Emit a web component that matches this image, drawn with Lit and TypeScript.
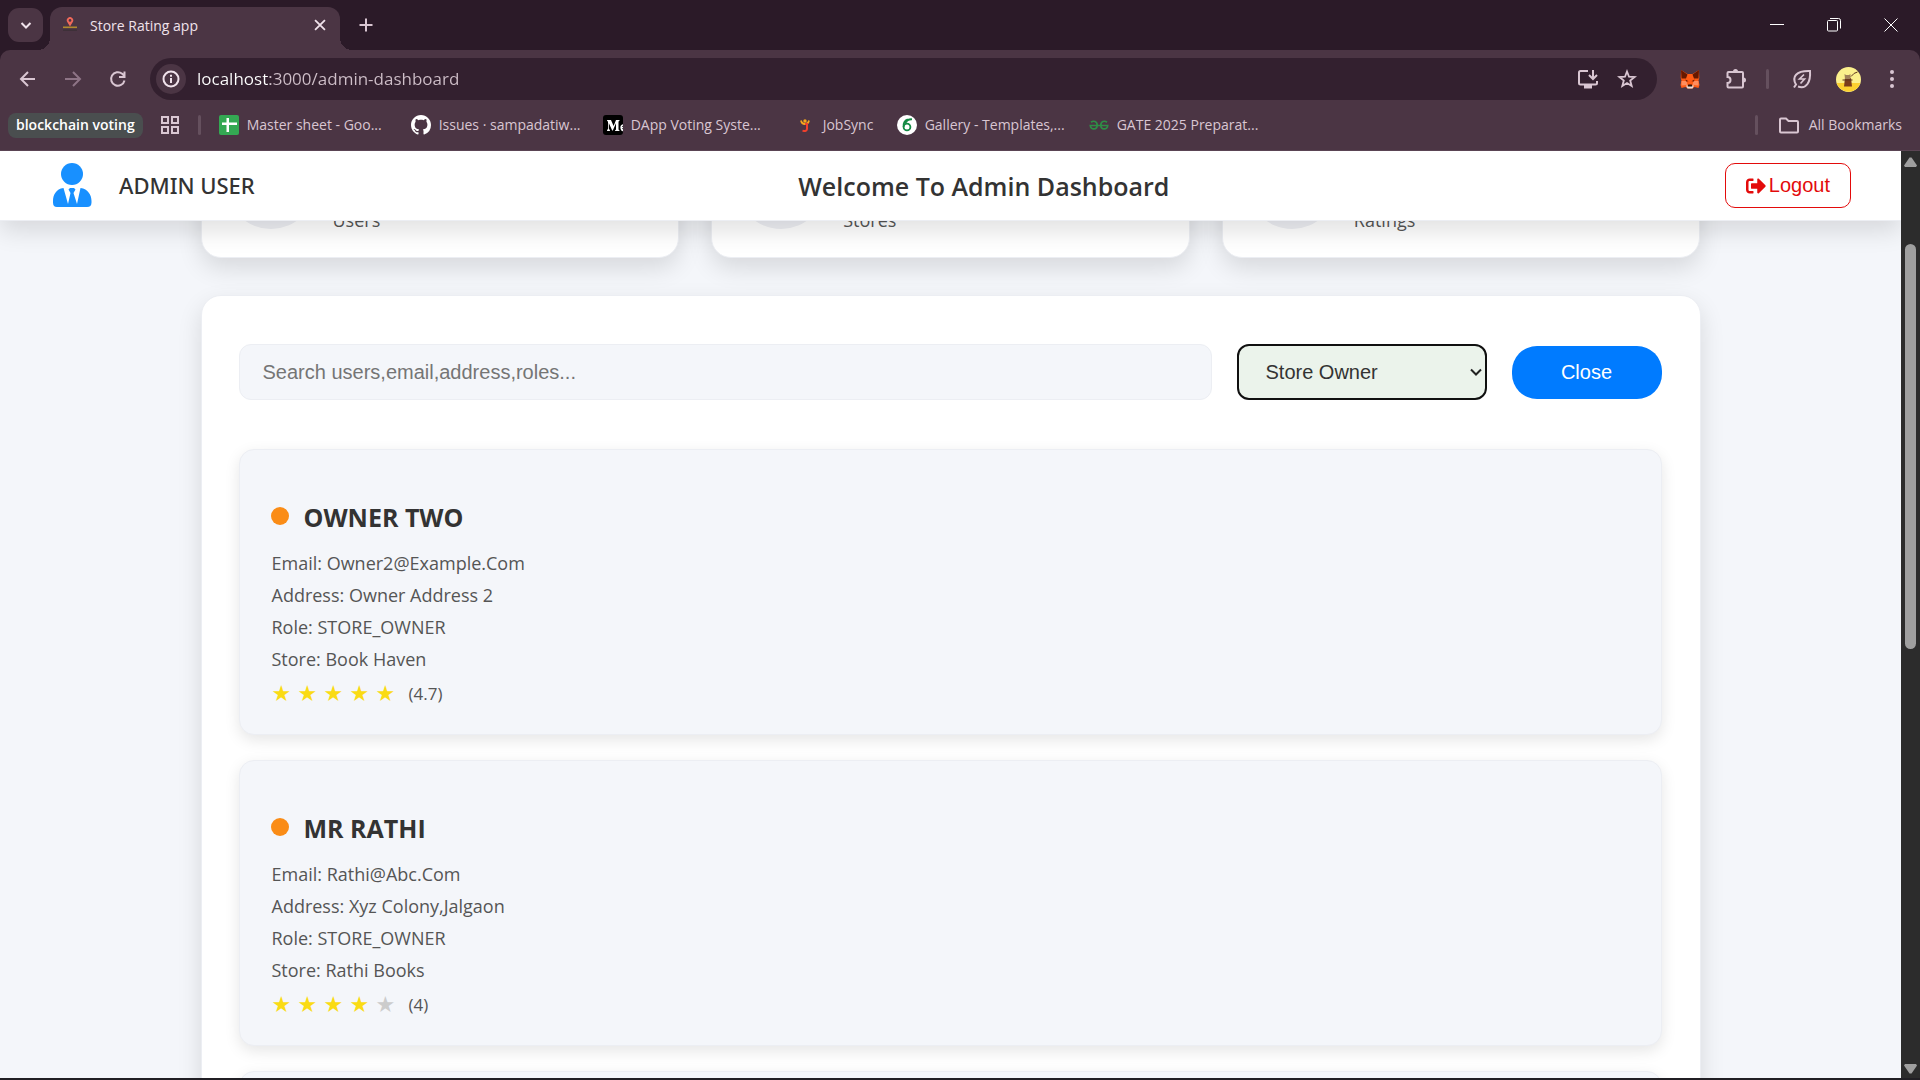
import { LitElement, html, css, svg, TemplateResult } from "lit";
import { customElement, property } from "lit/decorators.js";
import { classMap } from "lit/directives/class-map.js";

interface Bookmark {
  title: string;
  icon: TemplateResult;
  short?: boolean;
}

interface Owner {
  name: string;
  email: string;
  address: string;
  role: string;
  store: string;
  rating: number;
}

const favicon = html`<svg width="16" height="16" viewBox="0 0 16 16">
  <path d="M1 9.500h14v1.600H1z" fill="#b08a2e" />
  <path d="M1 12.500h14v1.500H1z" fill="#3d3038" />
  <path d="M8 9.500 5.400 5.200a3.200 3.200 0 1 1 5.200 0z" fill="#f0695a" />
  <circle cx="8" cy="3.400" r="1.300" fill="#4b3544" />
</svg>`;

const bookmarks: Bookmark[] = [
  {
    title: "Master sheet - Goo...",
    icon: html`<svg width="20" height="20" viewBox="0 0 20 20">
      <rect width="20" height="20" rx="2" fill="#34a853" />
      <path d="M7.500 3h2.500v4.500H18v2.500h-8V17H7.500v-7H3V7.500h4.500z" fill="#fff" />
    </svg>`,
  },
  {
    title: "Issues · sampadatiw...",
    icon: html`<svg width="20" height="20" viewBox="0 0 16 16">
      <path
        fill="#fff"
        d="M8 0C3.580 0 0 3.580 0 8c0 3.540 2.290 6.530 5.470 7.590.4.070.550-.170.550-.380 0-.190-.010-.820-.010-1.490-2.010.370-2.530-.490-2.690-.940-.090-.230-.480-.940-.820-1.130-.280-.150-.680-.520-.010-.530.630-.010 1.080.580 1.230.820.720 1.210 1.870.870 2.330.660.070-.520.280-.870.510-1.070-1.780-.200-3.640-.890-3.640-3.950 0-.870.310-1.590.820-2.150-.080-.200-.360-1.020.080-2.120 0 0 .670-.210 2.200.820.640-.180 1.320-.270 2-.270s1.360.090 2 .270c1.530-1.040 2.200-.820 2.200-.820.440 1.100.160 1.920.080 2.120.510.560.820 1.270.820 2.150 0 3.070-1.870 3.750-3.650 3.950.290.250.540.730.540 1.480 0 1.070-.010 1.930-.010 2.200 0 .210.150.460.550.380A8.010 8.010 0 0 0 16 8c0-4.420-3.580-8-8-8z"
      />
    </svg>`,
  },
  {
    title: "DApp Voting Syste...",
    icon: html`<svg width="20" height="20" viewBox="0 0 20 20">
      <rect width="20" height="20" rx="3" fill="#000" />
      <path
        fill="#fff"
        d="M4 5h4l2.600 6L13 5h3.500v.8l-1 .8v8l1 .8v.6h-4.500v-.6l1-.8V8.200L9.800 15.600h-.6L5.800 8v5.600l1.200 1.800v.6H4v-.6l1-1.600V6.800L4 5.600z"
      />
      <path d="M20 9.200a3.200 3.200 0 0 0-2.600 3.500c0 2 1.100 3.300 2.600 3.500v-2a2 2 0 0 1-.8-1.200h.8v-1h-.9c0-.6.4-1.100.9-1.200z" fill="#fff" />
    </svg>`,
  },
  {
    title: "JobSync",
    short: true,
    icon: html`<svg width="20" height="20" viewBox="0 0 20 20">
      <path d="M6 5.500c.5 2.500 1.700 3.500 4 3.500s3.500-1 4-3.500" fill="none" stroke="#f5a81c" stroke-width="1.800" />
      <circle cx="10" cy="6" r="1.700" fill="#f5a81c" />
      <path d="M10 9h2v5q0 2.500-4.500 1.800" fill="none" stroke="#f0402c" stroke-width="2" />
    </svg>`,
  },
  {
    title: "Gallery - Templates,...",
    icon: html`<svg width="20" height="20" viewBox="0 0 20 20">
      <circle cx="10" cy="10" r="10" fill="#fff" />
      <circle cx="10" cy="12" r="3.400" fill="none" stroke="#138a43" stroke-width="1.800" />
      <path d="M6.600 12c-.4-3.600 1.500-6.500 4.200-7.600M8.500 8c1.200-2.700 3.600-3.900 6.500-3.700" fill="none" stroke="#138a43" stroke-width="1.800" />
    </svg>`,
  },
  {
    title: "GATE 2025 Preparat...",
    icon: html`<svg width="20" height="20" viewBox="0 0 20 20">
      <path
        d="M2 7.200c2.600-1.900 6.200-.9 6.200 3 0 4.600-6.600 5.300-6.900.3h17.400c-.3 5-6.900 4.300-6.900-.3 0-3.900 3.600-4.900 6.200-3"
        fill="none"
        stroke="#2f8d46"
        stroke-width="1.700"
      />
    </svg>`,
  },
];

const owners: Owner[] = [
  { name: "OWNER TWO", email: "Owner2@Example.Com", address: "Owner Address 2", role: "STORE_OWNER", store: "Book Haven", rating: 4.7 },
  { name: "MR RATHI", email: "Rathi@Abc.Com", address: "Xyz Colony,Jalgaon", role: "STORE_OWNER", store: "Rathi Books", rating: 4 },
];

const stroke = (size: number, body: TemplateResult<2>) => html`<svg
  width=${size}
  height=${size}
  viewBox="0 0 20 20"
  fill="none"
  stroke="currentColor"
  stroke-width="2"
>
  ${body}
</svg>`;

@customElement("browser-chrome")
class BrowserChrome extends LitElement {
  static styles = css`
    :host {
      display: block;
      font-family: "Open Sans", "Noto Sans", sans-serif;
      color: #d9c6d2;
      background: #2b1a28;
    }
    button,
    a {
      display: flex;
      align-items: center;
      justify-content: center;
      padding: 0;
      border: 0;
      background: none;
      color: inherit;
      font: inherit;
      text-decoration: none;
    }
    svg {
      display: block;
      flex: none;
    }
    .strip {
      display: flex;
      height: 50px;
    }
    .tabsearch {
      width: 35px;
      height: 34px;
      margin: 8px 7px 0 8px;
      border-radius: 11px;
      background: #4b3544;
      color: #f0e2eb;
    }
    .tab {
      position: relative;
      display: flex;
      align-items: center;
      width: 290px;
      height: 43px;
      margin-top: 7px;
      padding: 0 11px 0 12px;
      box-sizing: border-box;
      border-radius: 12px 12px 0 0;
      background: #4b3544;
      color: #f0e2eb;
    }
    .tab::before,
    .tab::after {
      content: "";
      position: absolute;
      bottom: 0;
      width: 12px;
      height: 12px;
    }
    .tab::before {
      right: 100%;
      background: radial-gradient(circle at 0 0, transparent 12px, #4b3544 12px);
    }
    .tab::after {
      left: 100%;
      background: radial-gradient(circle at 100% 0, transparent 12px, #4b3544 12px);
    }
    .tab-title {
      flex: 1;
      padding: 0 0 6px 12px;
      font-size: 14px;
      line-height: 20px;
    }
    .tab svg {
      margin-bottom: 7px;
    }
    .newtab {
      width: 28px;
      height: 36px;
      margin: 7px 0 0 12px;
    }
    .window {
      display: flex;
      margin: 0 1px 0 auto;
      color: #fff;
    }
    .window button {
      width: 57px;
      height: 49px;
    }
    .toolbar {
      display: flex;
      align-items: center;
      height: 58px;
      padding: 0 14px 0 13px;
      border-radius: 10px 10px 0 0;
      background: #4b3544;
    }
    .nav {
      width: 30px;
      height: 30px;
      margin-right: 15px;
    }
    .nav.dim {
      color: #8e7486;
    }
    .omnibox {
      display: flex;
      flex: 1;
      align-items: center;
      height: 42px;
      margin: 0 17px 0 2px;
      padding: 0 18px 0 6px;
      border-radius: 21px;
      background: #33202f;
    }
    .info {
      width: 30px;
      height: 30px;
      border-radius: 15px;
      background: #4b3544;
      color: #f0e2eb;
    }
    .url {
      flex: 1;
      min-width: 0;
      padding: 0 0 0 11px;
      border: 0;
      outline: 0;
      font-family: inherit;
      font-size: 17px;
      line-height: 26px;
      color: #cfbfc9;
      background: linear-gradient(90deg, #fff 84px, #cfbfc9 84px);
      -webkit-background-clip: text;
      background-clip: text;
      -webkit-text-fill-color: transparent;
    }
    .omnibox .tool {
      width: 24px;
      height: 30px;
      margin-left: 15px;
    }
    .ext {
      width: 32px;
      height: 32px;
      margin-right: 14px;
    }
    .rule {
      width: 3px;
      height: 20px;
      border-radius: 2px;
      background: #65505e;
    }
    .toolbar .rule {
      margin-right: 17px;
    }
    .menu {
      width: 28px;
      height: 32px;
    }
    .marks {
      display: flex;
      align-items: center;
      box-sizing: border-box;
      height: 43px;
      padding: 0 18px 8px 8px;
      border-bottom: 1px solid #5a4453;
      background: #4b3544;
      font-size: 14px;
      line-height: 20px;
    }
    .group {
      height: 25px;
      padding: 0 8px;
      border-radius: 8px;
      background: #4a4e4f;
      color: #fff;
      font-weight: 600;
    }
    .apps {
      margin: 0 18px 0 17px;
    }
    .mark {
      flex: 0 0 184px;
      justify-content: flex-start;
      gap: 8px;
      padding-right: 8px;
      white-space: nowrap;
    }
    .mark.short {
      flex-basis: 94px;
    }
    .list {
      display: flex;
      flex: 1;
      margin-left: 18px;
    }
    .all {
      gap: 9px;
      margin-left: 20px;
    }
  `;

  render() {
    return html`
      <div class="strip">
        <button class="tabsearch" aria-label="Search tabs">
          ${stroke(20, svg`<path d="m5.500 8 4.500 4.500L14.500 8" />`)}
        </button>
        <div class="tab">
          ${favicon}
          <span class="tab-title">Store Rating app</span>
          <button aria-label="Close tab">
            ${stroke(18, svg`<path d="M4.500 4.500l11 11m0-11l-11 11" />`)}
          </button>
        </div>
        <button class="newtab" aria-label="New tab">
          ${stroke(20, svg`<path d="M10 3.500v13M3.500 10h13" />`)}
        </button>
        <div class="window">
          <button aria-label="Minimize">
            <svg width="14" height="14" stroke="currentColor"><path d="M0 6.500h14" /></svg>
          </button>
          <button aria-label="Restore">
            <svg width="14" height="14" fill="none" stroke="currentColor">
              <rect x=".5" y="2.500" width="10" height="10.500" rx="1" />
              <path d="M3 .5h8.500a2 2 0 0 1 2 2V10.500" />
            </svg>
          </button>
          <button aria-label="Close">
            <svg width="14" height="14" stroke="currentColor"><path d="M.5.5l13 13m0-13l-13 13" /></svg>
          </button>
        </div>
      </div>

      <div class="toolbar">
        <button class="nav" aria-label="Back">
          ${stroke(20, svg`<path d="M17 10H3.500M10 3l-7 7 7 7" />`)}
        </button>
        <button class="nav dim" aria-label="Forward">
          ${stroke(20, svg`<path d="M2 10h14.500M10 3l7 7-7 7" />`)}
        </button>
        <button class="nav" aria-label="Reload">
          ${stroke(20, svg`<path d="M16.500 11.500A6.800 6.800 0 1 1 14.200 4.700L16.500 7M16.500 2.500V8H11" />`)}
        </button>
        <div class="omnibox">
          <button class="info" aria-label="Site information">
            ${stroke(20, svg`<circle cx="10" cy="10" r="7.500" /><path d="M10 9v5M10 5.800v2" />`)}
          </button>
          <input class="url" aria-label="Address" value="localhost:3000/admin-dashboard" />
          <button class="tool" aria-label="Install app">
            <svg width="22" height="20" viewBox="0 0 22 20" fill="none" stroke="currentColor" stroke-width="2">
              <path d="M11 2H3.500Q2 2 2 3.500v10.500q0 1.500 1.500 1.500h15q1.500 0 1.500-1.500V12M16 1v8.500M12 6l4 4 4-4" />
              <path d="M8 16.500h6v2H8z" fill="currentColor" />
            </svg>
          </button>
          <button class="tool" aria-label="Bookmark this page">
            <svg width="20" height="20" viewBox="0 0 20 20" fill="none" stroke="currentColor" stroke-width="1.800">
              <path d="m10 2.500 2 5.200 5.600.3-4.400 3.500 1.500 5.500L10 14l-4.700 3 1.500-5.500L2.400 8l5.600-.3z" />
            </svg>
          </button>
        </div>
        <button class="ext" aria-label="Wallet extension">
          <svg width="20" height="20" viewBox="0 0 20 20">
            <path d="M1 1l6.500 4h5L19 1l.3 8-.8 2.500L19.500 16l-1 3-4-1-2 1.500h-5l-2-1.500-4 1-1-3 1-4.500L.7 9z" fill="#ff5c16" />
            <path d="M1 1 7.500 5.500 6 9.500H1.500zM19 1l-6.500 4.500 1.500 4h4.500z" fill="#661800" />
            <path d="M1.500 12h5l1 4-6 .5zM18.500 12h-5l-1 4 6 .5z" fill="#ff8d5d" />
            <path d="M5.500 10.500l3 1.800-2.500.3zM14.500 10.500l-3 1.800 2.500.3z" fill="#661800" />
            <path d="M6 16.500h8L12.500 19.500h-5z" fill="#e8dfdc" />
            <path d="M8.200 15.500h3.600l.5 2H7.700z" fill="#2a1208" />
          </svg>
        </button>
        <button class="ext" aria-label="Extensions">
          <svg width="22" height="22" viewBox="0 0 22 22" fill="none" stroke="currentColor" stroke-width="2">
            <path d="M3.500 4h13.500q1 0 1 1v13.500q0 1-1 1H3.500q-1 0-1-1V15a3 3 0 0 0 0-6V5q0-1 1-1z" />
            <path d="M8 3.500a2.500 2.500 0 0 1 5 0zM18.500 9.500a2.500 2.500 0 0 1 0 5z" fill="currentColor" stroke="none" />
          </svg>
        </button>
        <span class="rule"></span>
        <button class="ext" aria-label="Energy saver">
          <svg width="22" height="22" viewBox="0 0 22 22" fill="none" stroke="currentColor" stroke-width="2">
            <path d="M3 19.500l2-3C.5 9 5 2.500 19 3c.8 11-3.500 18.500-12 15.500" />
            <path d="M13 6.500 8.500 11h5L9.500 15.500" stroke-width="1.700" />
          </svg>
        </button>
        <button class="ext" aria-label="Profile">
          <svg width="25" height="25" viewBox="0 0 25 25">
            <circle cx="12.500" cy="12.500" r="12.500" fill="#fbf08c" />
            <path d="M.6 16h23.800A12.500 12.500 0 0 1 .6 16z" fill="#fcd02f" />
            <path d="M9 11h6l1 8.500H8z" fill="#7a3b1c" />
            <path d="M8.500 7l1.500 1h3l1.500-1v5H9z" fill="#a08058" />
            <path d="M6.500 13h10M15 9.500q3-4 6.500-4.500" stroke="#5d3520" fill="none" />
          </svg>
        </button>
        <button class="menu" aria-label="Menu">
          <svg width="20" height="20" fill="currentColor">
            <circle cx="10" cy="3" r="2" /><circle cx="10" cy="10" r="2" /><circle cx="10" cy="17" r="2" />
          </svg>
        </button>
      </div>

      <nav class="marks" aria-label="Bookmarks">
        <button class="group">blockchain voting</button>
        <button class="apps" aria-label="Apps">
          <svg width="20" height="20" fill="none" stroke="currentColor" stroke-width="2">
            <path d="M2 2h6v6H2zM12 2h6v6h-6zM2 12h6v6H2zM12 12h6v6h-6z" />
          </svg>
        </button>
        <span class="rule"></span>
        <div class="list">
          ${bookmarks.map(
            (b) => html`<a class=${classMap({ mark: true, short: !!b.short })} href="#">${b.icon}<span>${b.title}</span></a>`
          )}
        </div>
        <span class="rule"></span>
        <button class="all">
          <svg width="22" height="20" viewBox="0 0 22 20" fill="none" stroke="currentColor" stroke-width="2">
            <path d="M2 4.500Q2 3.500 3 3.500h5l2.500 2.500H19q1 0 1 1v9.500q0 1-1 1H3q-1 0-1-1z" />
          </svg>
          All Bookmarks
        </button>
      </nav>
    `;
  }
}

@customElement("owner-card")
class OwnerCard extends LitElement {
  @property({ attribute: false }) owner?: Owner;

  static styles = css`
    :host {
      display: block;
      padding: 49px 31px 21px;
      border: 1px solid #eceef3;
      border-radius: 15px;
      background: #f4f6fa;
      box-shadow: 0 5px 15px rgba(0, 0, 0, 0.1);
      color: #555;
      font-size: 18px;
      line-height: 32px;
    }
    .title {
      display: flex;
      align-items: center;
      gap: 15px;
      margin: 0 0 12px;
      color: #333;
      font-size: 25px;
      font-weight: 700;
      line-height: 36px;
    }
    .dot {
      width: 18px;
      height: 18px;
      margin-bottom: 2px;
      border-radius: 9px;
      background: #fa8c16;
    }
    .details {
      padding-left: 1px;
    }
    p {
      margin: 0;
    }
    .rating {
      display: flex;
      align-items: center;
      font-size: 17px;
      line-height: 38px;
    }
    .star {
      width: 26px;
      color: #fadb14;
      font-family: "DejaVu Sans", sans-serif;
      font-size: 22px;
    }
    .star.off {
      color: #ccc;
    }
    .score {
      margin-left: 7px;
    }
  `;

  render() {
    const o = this.owner;
    if (!o) return html``;
    return html`
      <h3 class="title"><span class="dot"></span>${o.name}</h3>
      <div class="details">
        <p>Email: ${o.email}</p>
        <p>Address: ${o.address}</p>
        <p>Role: ${o.role}</p>
        <p>Store: ${o.store}</p>
        <div class="rating">
          ${[1, 2, 3, 4, 5].map(
            (n) => html`<span class=${classMap({ star: true, off: n > Math.round(o.rating) })}>★</span>`
          )}
          <span class="score">(${o.rating})</span>
        </div>
      </div>
    `;
  }
}

@customElement("app-root")
class AppRoot extends LitElement {
  static styles = css`
    :host {
      display: flex;
      flex-direction: column;
      height: 100vh;
      overflow: hidden;
      background: #f4f6fa;
      color: #333;
      font-family: "Open Sans", "Noto Sans", sans-serif;
    }
    .view {
      display: flex;
      flex: 1;
      min-height: 0;
      border-bottom: 2px solid #211f24;
    }
    .page {
      flex: 1;
      min-width: 0;
      overflow: hidden;
    }
    .header {
      position: relative;
      z-index: 1;
      display: flex;
      align-items: center;
      justify-content: space-between;
      height: 69px;
      padding: 0 50px;
      border-bottom: 1px solid #eceef3;
      background: #fff;
      box-shadow: 0 10px 25px rgba(0, 0, 0, 0.12);
    }
    .user {
      display: flex;
      align-items: center;
      gap: 26px;
      padding: 0 0 2px 1px;
      font-family: "Noto Sans", "Open Sans", sans-serif;
      font-size: 22px;
      font-weight: 500;
    }
    .user svg {
      display: block;
    }
    .heading {
      margin: 0 12px 0 0;
      font-size: 25px;
      font-weight: 600;
      line-height: 34px;
    }
    .logout {
      display: flex;
      align-items: center;
      gap: 3px;
      height: 45px;
      padding: 0 20px;
      border: 1px solid #e30b0b;
      border-radius: 10px;
      background: #fff;
      color: #e30b0b;
      font-family: "Liberation Sans", Arial, sans-serif;
      font-size: 20px;
    }
    .content {
      max-width: 1500px;
      margin: 0 auto;
    }
    /* The statistics row is scrolled most of the way under the header. */
    .stats {
      display: grid;
      grid-template-columns: repeat(3, 1fr);
      gap: 32px;
      margin-top: -111px;
    }
    .stat {
      display: flex;
      align-items: center;
      gap: 17px;
      padding: 28px 24px;
      border: 1px solid #eceef3;
      border-radius: 20px;
      background: #fff;
      box-shadow: 0 10px 25px rgba(0, 0, 0, 0.12);
      color: #555;
      font-size: 18px;
      line-height: 18px;
    }
    .circle {
      width: 90px;
      height: 90px;
      border-radius: 45px;
      background: #eeeff4;
    }
    .label {
      align-self: flex-end;
    }
    .panel {
      display: flex;
      flex-direction: column;
      gap: 25px;
      margin-top: 37px;
      padding: 48px 38px 48px 37px;
      border: 1px solid #eceef3;
      border-radius: 20px;
      background: #fff;
      box-shadow: 0 10px 25px rgba(0, 0, 0, 0.12);
    }
    .filters {
      display: flex;
      align-items: center;
      gap: 25px;
      margin-bottom: 24px;
    }
    .search,
    .choice,
    .close {
      box-sizing: border-box;
      font-family: "Liberation Sans", Arial, sans-serif;
      font-size: 20px;
    }
    .search {
      flex: 1;
      min-width: 0;
      height: 56px;
      padding: 0 23px;
      border: 1px solid #eceef3;
      border-radius: 12px;
      background: #f4f6fa;
    }
    .search::placeholder {
      color: #757575;
    }
    .pick {
      display: grid;
      align-items: center;
    }
    .pick > * {
      grid-area: 1 / 1;
    }
    .pick svg {
      justify-self: end;
      margin-right: 5px;
      pointer-events: none;
    }
    .choice {
      width: 250px;
      height: 56px;
      padding: 0 27px;
      border: 2px solid #101010;
      border-radius: 12px;
      background: #ebf3eb;
      color: #333;
      appearance: none;
    }
    .close {
      width: 150px;
      height: 53px;
      border: 0;
      border-radius: 25px;
      background: #007bff;
      color: #fff;
    }
    .scroll {
      display: flex;
      flex-direction: column;
      align-items: center;
      width: 19px;
      padding: 6px 0 4px;
      box-sizing: border-box;
      background: #2c2c2c;
    }
    .thumb {
      width: 11px;
      height: 405px;
      margin: 77px 0 auto;
      border-radius: 6px;
      background: #9f9f9f;
    }
  `;

  render() {
    return html`
      <browser-chrome></browser-chrome>
      <div class="view">
        <div class="page">
          <header class="header">
            <div class="user">
              <svg width="42" height="46" viewBox="0 0 42 46" fill="#1890ff">
                <circle cx="21" cy="12" r="11" />
                <path d="M12.500 26C5 27 2 33 2 39v1.500Q2 45 6 45h30q4.500 0 4.500-4.500V39C40.500 33 37 27 29.500 26L26 42 22.500 31l2-3.500-1.500-1.500h-4l-1.500 1.500 2 3.500L17 42z" />
              </svg>
              <span>ADMIN USER</span>
            </div>
            <h1 class="heading">Welcome To Admin Dashboard</h1>
            <button class="logout">
              <svg width="20" height="20" viewBox="0 0 512 512" fill="currentColor">
                <path
                  d="M497 273 329 441c-15 15-41 4.500-41-17v-96H152c-13.300 0-24-10.700-24-24v-96c0-13.300 10.700-24 24-24h136V88c0-21.400 25.900-32 41-17l168 168c9.300 9.400 9.300 24.600 0 34zM192 436v-40c0-6.600-5.400-12-12-12H96c-17.700 0-32-14.300-32-32V160c0-17.700 14.300-32 32-32h84c6.600 0 12-5.400 12-12V76c0-6.600-5.400-12-12-12H96c-53 0-96 43-96 96v192c0 53 43 96 96 96h84c6.600 0 12-5.400 12-12z"
                />
              </svg>
              Logout
            </button>
          </header>
          <main class="content">
            <section class="stats">
              ${["Users", "Stores", "Ratings"].map(
                (t) => html`<div class="stat"><span class="circle"></span><span class="label">${t}</span></div>`
              )}
            </section>
            <section class="panel">
              <div class="filters">
                <input class="search" type="text" aria-label="Search users" placeholder="Search users,email,address,roles..." />
                <div class="pick">
                  <select class="choice" aria-label="Role">
                    <option>Store Owner</option>
                  </select>
                  <svg width="12" height="12" fill="none" stroke="#222" stroke-width="2"><path d="m1 3.500 5 5 5-5" /></svg>
                </div>
                <button class="close">Close</button>
              </div>
              ${owners.map((o) => html`<owner-card .owner=${o}></owner-card>`)}
              <owner-card></owner-card>
            </section>
          </main>
        </div>
        <div class="scroll" aria-hidden="true">
          <svg width="13" height="10" fill="#9f9f9f"><path d="M5.500.5h2L13 8.500 12 10H1L0 8.500z" /></svg>
          <span class="thumb"></span>
          <svg width="13" height="10" fill="#9f9f9f"><path d="M5.500 9.500h2L13 1.500 12 0H1L0 1.500z" /></svg>
        </div>
      </div>
    `;
  }
}
